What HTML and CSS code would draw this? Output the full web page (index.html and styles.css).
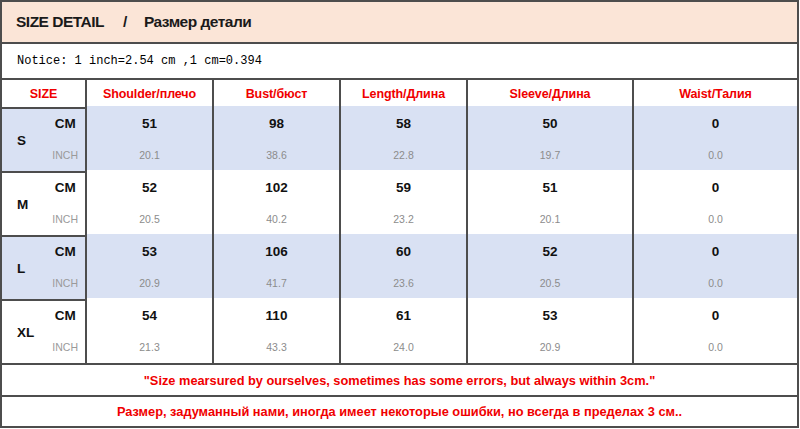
FILE: index.html
```html
<!DOCTYPE html>
<html>
<head>
<meta charset="utf-8">
<link rel="stylesheet" href="styles.css">
</head>
<body>
<div class="sheet">
  <div class="band title"><span>SIZE DETAIL</span><span class="slash">/</span><span>Размер детали</span></div>
  <div class="band notice">Notice: 1 inch=2.54 cm ,1 cm=0.394</div>
  <div class="grid">
    <div class="hd">SIZE</div>
    <div class="hd">Shoulder/плечо</div>
    <div class="hd">Bust/бюст</div>
    <div class="hd">Length/Длина</div>
    <div class="hd">Sleeve/Длина</div>
    <div class="hd">Waist/Талия</div>

    <div class="sz blue"><span class="lbl">S</span><span class="units"><b>CM</b><i>INCH</i></span></div>
    <div class="val blue"><b>51</b><i>20.1</i></div>
    <div class="val blue"><b>98</b><i>38.6</i></div>
    <div class="val blue"><b>58</b><i>22.8</i></div>
    <div class="val blue"><b>50</b><i>19.7</i></div>
    <div class="val blue"><b>0</b><i>0.0</i></div>

    <div class="sz"><span class="lbl">M</span><span class="units"><b>CM</b><i>INCH</i></span></div>
    <div class="val"><b>52</b><i>20.5</i></div>
    <div class="val"><b>102</b><i>40.2</i></div>
    <div class="val"><b>59</b><i>23.2</i></div>
    <div class="val"><b>51</b><i>20.1</i></div>
    <div class="val"><b>0</b><i>0.0</i></div>

    <div class="sz blue"><span class="lbl">L</span><span class="units"><b>CM</b><i>INCH</i></span></div>
    <div class="val blue"><b>53</b><i>20.9</i></div>
    <div class="val blue"><b>106</b><i>41.7</i></div>
    <div class="val blue"><b>60</b><i>23.6</i></div>
    <div class="val blue"><b>52</b><i>20.5</i></div>
    <div class="val blue"><b>0</b><i>0.0</i></div>

    <div class="sz"><span class="lbl">XL</span><span class="units"><b>CM</b><i>INCH</i></span></div>
    <div class="val"><b>54</b><i>21.3</i></div>
    <div class="val"><b>110</b><i>43.3</i></div>
    <div class="val"><b>61</b><i>24.0</i></div>
    <div class="val"><b>53</b><i>20.9</i></div>
    <div class="val"><b>0</b><i>0.0</i></div>
  </div>
  <div class="band foot f1">"Size mearsured by ourselves, sometimes has some errors, but always within 3cm."</div>
  <div class="band foot f2">Размер, задуманный нами, иногда имеет некоторые ошибки, но всегда в пределах 3 см..</div>
</div>
</body>
</html>
```
FILE: styles.css
```css
html, body {
  margin: 0;
  padding: 0;
  background: #ffffff;
}

.sheet {
  width: 799px;
  display: flex;
  flex-direction: column;
  gap: 2px;
  padding: 2px 0;
  background: #4d4d4d;
  box-sizing: border-box;
  font-family: "Liberation Sans", Arial, sans-serif;
}

.band {
  margin: 0 2px;
  background: #ffffff;
  display: flex;
  align-items: center;
}

.title {
  height: 40px;
  background: #fbe5d7;
  padding-left: 14px;
  font-size: 15.5px;
  font-weight: bold;
  color: #1a1a1a;
  letter-spacing: -0.5px;
}

.title .slash {
  margin: 0 17px 0 19px;
}

.notice {
  height: 34px;
  padding-left: 15px;
  font-family: "Liberation Mono", "Courier New", monospace;
  font-size: 12px;
  color: #000;
}

.grid {
  margin: 0 2px;
  display: grid;
  grid-template-columns: 83px 125px 125px 125px 164px 163px;
  grid-template-rows: 27px 62px 62px 62px 62px;
  gap: 2px;
}

.grid > div {
  background: #ffffff;
}

.grid > div.blue {
  background: #d9e1f3;
}

.hd {
  display: flex;
  align-items: center;
  justify-content: center;
  color: #f00000;
  font-weight: bold;
  font-size: 12.5px;
  letter-spacing: -0.1px;
}

.sz {
  display: flex;
  align-items: center;
  justify-content: space-between;
  padding: 0 7px 0 15px;
}

.lbl {
  font-weight: bold;
  font-size: 13.5px;
  color: #111;
}

.units {
  display: flex;
  flex-direction: column;
  align-items: center;
  gap: 18px;
  margin-top: -3px;
}

.units b {
  font-size: 13.5px;
  color: #111;
}

.units i {
  font-style: normal;
  font-size: 10.5px;
  color: #9a9a9a;
}

.val {
  display: flex;
  flex-direction: column;
  align-items: center;
  justify-content: center;
  gap: 18px;
  margin-top: -3px;
}

.val b {
  font-size: 13.5px;
  color: #111;
}

.val i {
  font-style: normal;
  font-size: 10.5px;
  color: #8c8c8c;
}

.foot {
  justify-content: center;
  color: #f00000;
  font-weight: bold;
  font-size: 12.8px;
}

.f1 {
  height: 30px;
}

.f2 {
  height: 29px;
}
```
